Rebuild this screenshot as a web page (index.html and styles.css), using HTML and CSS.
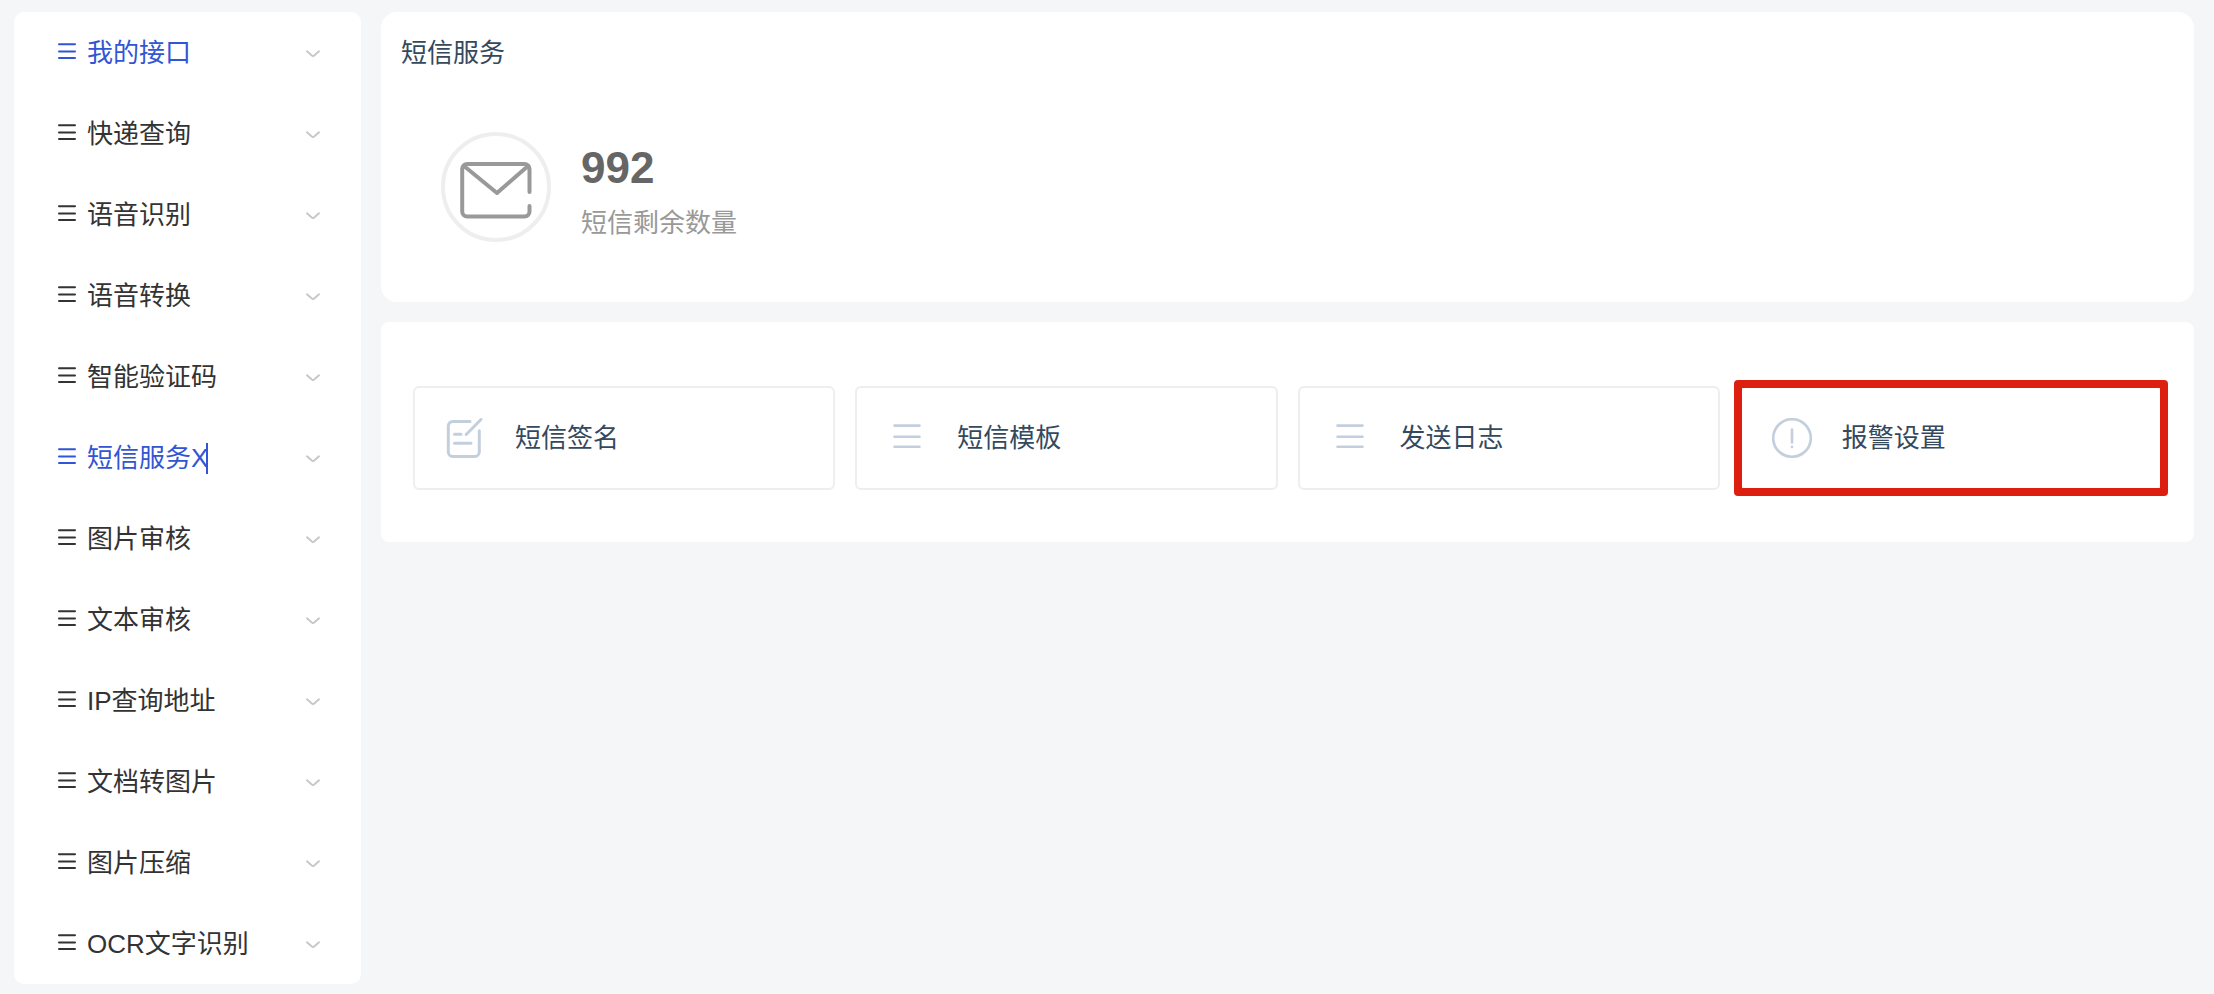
FILE: index.html
```
<!DOCTYPE html>
<html lang="zh-CN">
<head>
  <meta charset="UTF-8" />
  <meta name="viewport" content="width=device-width, initial-scale=1" />
  <title>短信服务</title>
  <link rel="stylesheet" href="styles.css">
</head>
<body>
  <svg class="sprite" aria-hidden="true">
    <symbol id="icon-list" viewBox="0 0 18 19">
      <path d="M1 1.200h16M1 8.500h16M1 15h16" />
    </symbol>
    <symbol id="icon-arrow" viewBox="0 0 14 15">
      <path d="M1 6.300l4.800 4.300q1.200 1 2.400 0L13 6.300" />
    </symbol>
    <symbol id="icon-lines" viewBox="0 0 40 40">
      <path d="M7.500 7.600h25M7.500 18.800h25M7.500 28.800h25" />
    </symbol>
  </svg>

  <nav class="sidebar">
    <button class="menu-item active" type="button">
      <svg class="menu-icon"><use href="#icon-list" /></svg>
      <span class="menu-text">我的接口</span>
      <svg class="menu-arrow"><use href="#icon-arrow" /></svg>
    </button>
    <button class="menu-item" type="button">
      <svg class="menu-icon"><use href="#icon-list" /></svg>
      <span class="menu-text">快递查询</span>
      <svg class="menu-arrow"><use href="#icon-arrow" /></svg>
    </button>
    <button class="menu-item" type="button">
      <svg class="menu-icon"><use href="#icon-list" /></svg>
      <span class="menu-text">语音识别</span>
      <svg class="menu-arrow"><use href="#icon-arrow" /></svg>
    </button>
    <button class="menu-item" type="button">
      <svg class="menu-icon"><use href="#icon-list" /></svg>
      <span class="menu-text">语音转换</span>
      <svg class="menu-arrow"><use href="#icon-arrow" /></svg>
    </button>
    <button class="menu-item" type="button">
      <svg class="menu-icon"><use href="#icon-list" /></svg>
      <span class="menu-text">智能验证码</span>
      <svg class="menu-arrow"><use href="#icon-arrow" /></svg>
    </button>
    <button class="menu-item active" type="button">
      <svg class="menu-icon"><use href="#icon-list" /></svg>
      <span class="menu-text caret">短信服务X</span>
      <svg class="menu-arrow"><use href="#icon-arrow" /></svg>
    </button>
    <button class="menu-item" type="button">
      <svg class="menu-icon"><use href="#icon-list" /></svg>
      <span class="menu-text">图片审核</span>
      <svg class="menu-arrow"><use href="#icon-arrow" /></svg>
    </button>
    <button class="menu-item" type="button">
      <svg class="menu-icon"><use href="#icon-list" /></svg>
      <span class="menu-text">文本审核</span>
      <svg class="menu-arrow"><use href="#icon-arrow" /></svg>
    </button>
    <button class="menu-item" type="button">
      <svg class="menu-icon"><use href="#icon-list" /></svg>
      <span class="menu-text">IP查询地址</span>
      <svg class="menu-arrow"><use href="#icon-arrow" /></svg>
    </button>
    <button class="menu-item" type="button">
      <svg class="menu-icon"><use href="#icon-list" /></svg>
      <span class="menu-text">文档转图片</span>
      <svg class="menu-arrow"><use href="#icon-arrow" /></svg>
    </button>
    <button class="menu-item" type="button">
      <svg class="menu-icon"><use href="#icon-list" /></svg>
      <span class="menu-text">图片压缩</span>
      <svg class="menu-arrow"><use href="#icon-arrow" /></svg>
    </button>
    <button class="menu-item" type="button">
      <svg class="menu-icon"><use href="#icon-list" /></svg>
      <span class="menu-text">OCR文字识别</span>
      <svg class="menu-arrow"><use href="#icon-arrow" /></svg>
    </button>
  </nav>

  <main class="main">
    <section class="summary">
      <h2>短信服务</h2>
      <div class="summary-body">
        <div class="circle">
          <svg class="mail" viewBox="0 0 72 58">
            <path d="M69.500 31V8a5 5 0 0 0-5-5H7.200a5 5 0 0 0-5 5v42.500a5 5 0 0 0 5 5h57.300a5 5 0 0 0 5-5v-5.500M4 5l33 27L68 5" />
          </svg>
        </div>
        <div class="count">
          <strong>992</strong>
          <span>短信剩余数量</span>
        </div>
      </div>
    </section>

    <section class="actions">
      <a class="card" href="#">
        <svg class="card-icon edit" viewBox="0 0 40 40">
          <path d="M25 3.500H7.800a4.500 4.500 0 0 0-4.500 4.500v26a4.500 4.500 0 0 0 4.500 4.500h22a4.500 4.500 0 0 0 4.500-4.500V12.800M21.200 16.500L36 1.500M9.500 16.300h6.500M9.500 25.300h16.500" />
        </svg>
        <span>短信签名</span>
      </a>
      <a class="card" href="#">
        <svg class="card-icon"><use href="#icon-lines" /></svg>
        <span>短信模板</span>
      </a>
      <a class="card" href="#">
        <svg class="card-icon"><use href="#icon-lines" /></svg>
        <span>发送日志</span>
      </a>
      <a class="card marked" href="#">
        <svg class="card-icon" viewBox="0 0 40 40">
          <circle cx="20" cy="20" r="18.800" />
          <path d="M20 11.500v13M20 28.700v.2" />
        </svg>
        <span>报警设置</span>
      </a>
    </section>
  </main>
</body>
</html>
```
FILE: styles.css
```
* {
  box-sizing: border-box;
}

body {
  display: flex;
  align-items: flex-start;
  gap: 20px;
  margin: 0;
  padding: 12px 20px 10px 14px;
  font-family: "Liberation Sans", "Noto Sans CJK SC", sans-serif;
  font-size: 26px;
  color: #34495e;
  background: #f4f6f8;
}

svg {
  flex: none;
  fill: none;
  stroke: currentColor;
  stroke-linecap: round;
  stroke-linejoin: round;
}

.sprite {
  position: absolute;
  width: 0;
  height: 0;
}

/* left menu */
.sidebar {
  flex: none;
  width: 347px;
  background: #fff;
  border-radius: 10px;
}

.menu-item {
  display: flex;
  align-items: center;
  width: 100%;
  height: 81px;
  padding: 0 41px 0 44px;
  border: none;
  background: none;
  font: inherit;
  line-height: 40px;
  color: #333;
  text-align: left;
  cursor: pointer;
}

.menu-item.active {
  color: #3155d4;
}

.menu-icon {
  width: 18px;
  height: 19px;
  margin-right: 11px;
  stroke-width: 2;
}

.menu-arrow {
  width: 14px;
  height: 15px;
  margin-left: auto;
  color: #c8c8c8;
  stroke-width: 2;
}

.caret {
  position: relative;
}

.caret::after {
  content: "";
  position: absolute;
  top: 5px;
  right: 0;
  width: 2px;
  height: 31px;
  background: currentColor;
}

/* content */
.main {
  flex: 1;
  min-width: 0;
}

.summary {
  padding: 0 20px 60px;
  margin-bottom: 20px;
  background: #fff;
  border-radius: 16px;
}

h2 {
  margin: 0;
  font-size: 26px;
  font-weight: 400;
  line-height: 82px;
}

.summary-body {
  display: flex;
  gap: 30px;
  padding: 38px 40px 0;
}

.circle {
  display: flex;
  align-items: center;
  justify-content: center;
  width: 110px;
  height: 110px;
  border: 4px solid #eee;
  border-radius: 50%;
}

.mail {
  width: 72px;
  height: 58px;
  margin-top: 6px;
  color: #999;
  stroke-width: 4;
}

.count strong,
.count span {
  display: block;
}

.count strong {
  font-size: 44px;
  line-height: 72px;
  color: #666;
}

.count span {
  line-height: 38px;
  color: #999;
}

.actions {
  display: grid;
  grid-template-columns: repeat(4, 1fr);
  gap: 20px;
  padding: 64px 32px 52px;
  background: #fff;
  border-radius: 8px;
}

.card {
  position: relative;
  display: flex;
  align-items: center;
  gap: 30px;
  height: 104px;
  padding: 0 30px;
  border: 2px solid #eee;
  border-radius: 6px;
  line-height: 40px;
  color: inherit;
  text-decoration: none;
}

.card-icon {
  width: 40px;
  height: 40px;
  color: #c3cfdd;
  stroke-width: 2.6;
}

.card-icon.edit {
  stroke-width: 3;
}

.marked::after {
  content: "";
  position: absolute;
  inset: -8px;
  border: 8px solid #dc1f0e;
  border-radius: 4px;
}
```
